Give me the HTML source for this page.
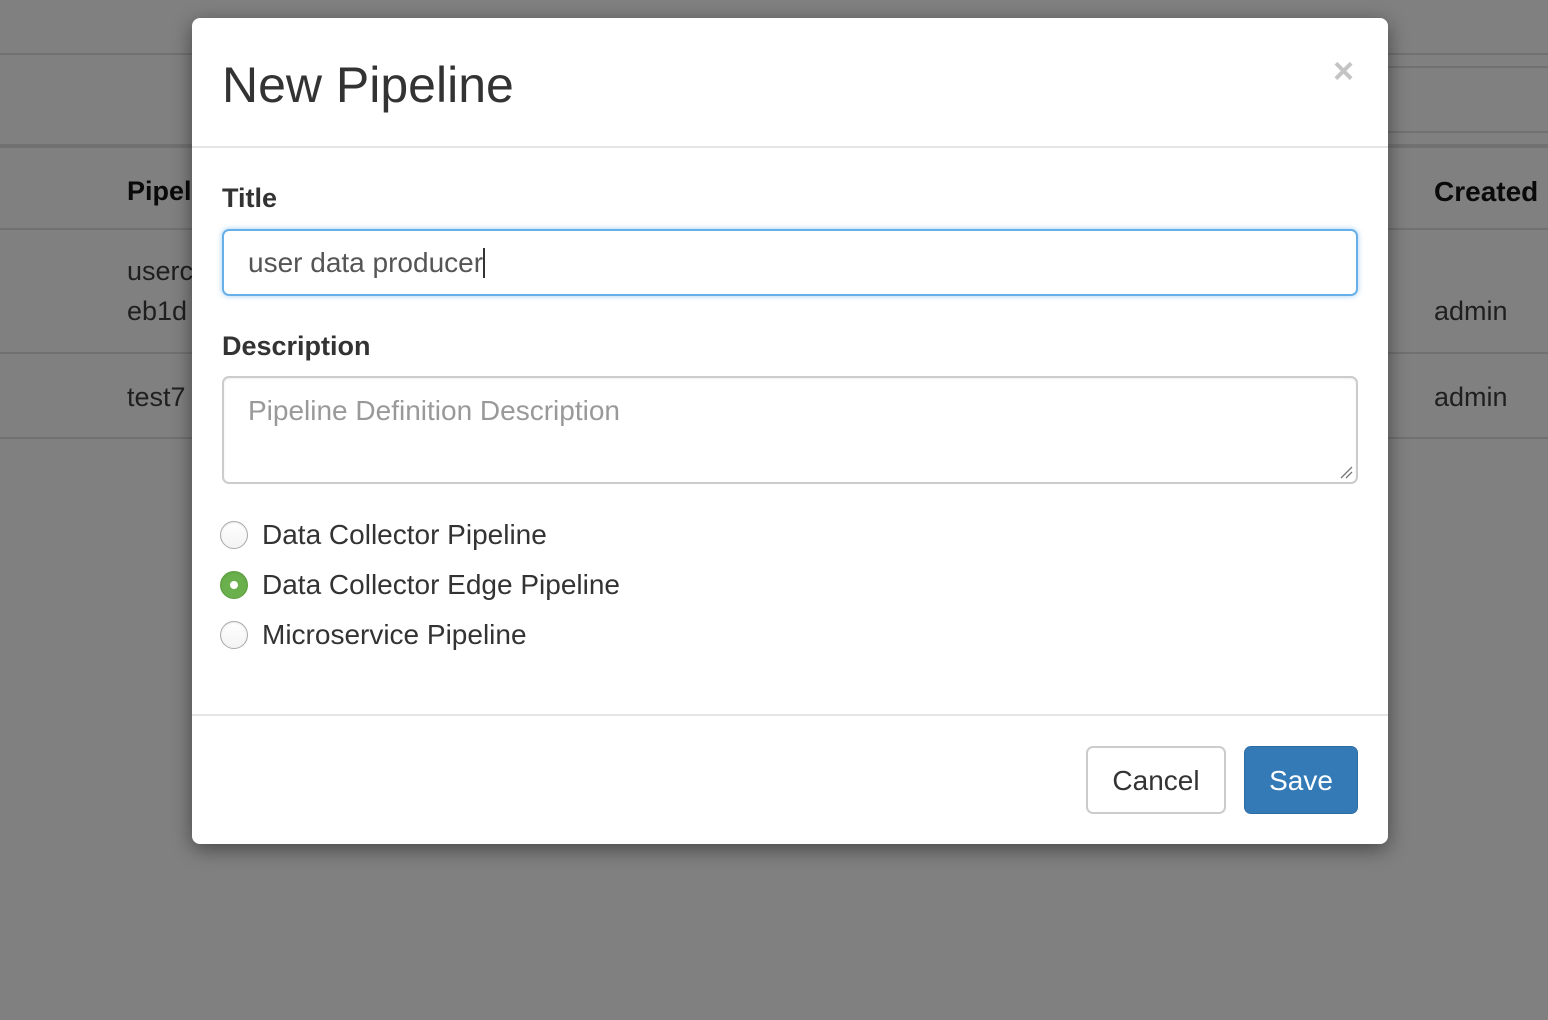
<!DOCTYPE html>
<html><head><meta charset="utf-8"><style>
*{margin:0;padding:0;box-sizing:border-box}
body{width:1548px;height:1020px;background:#808080;font-family:"Liberation Sans",Arial,sans-serif;position:relative;overflow:hidden;color:#333}
.l{position:absolute;left:0;right:0;height:2px;background:#717171}
.t{position:absolute;font-size:27px;color:#1f1f1f;white-space:nowrap}
.b{font-weight:bold;color:#0a0a0a}
.m{position:absolute;left:192px;top:18px;width:1196px;height:826px;background:#fff;border-radius:8px;box-shadow:0 5px 20px rgba(0,0,0,.45)}
.a{position:absolute;white-space:nowrap}
.r{position:absolute;left:220px;width:28px;height:28px;border-radius:50%;border:1px solid #aaa;background:linear-gradient(#fff,#f3f3f3);box-shadow:inset 0 1px 2px rgba(0,0,0,.08)}
.rl{position:absolute;left:262px;font-size:28px;color:#333}
</style></head><body>
<div class="l" style="top:53px"></div>
<div class="l" style="top:66px;left:1388px"></div>
<div class="l" style="top:131px;left:1388px"></div>
<div class="l" style="top:144px;height:4px"></div>
<div class="l" style="top:228px"></div>
<div class="l" style="top:352px"></div>
<div class="l" style="top:437px"></div>
<div class="t b" style="left:127px;top:176px">Pipel</div>
<div class="t b" style="left:1434px;top:176px;font-size:28px">Created</div>
<div class="t" style="left:127px;top:256px">userc</div>
<div class="t" style="left:127px;top:296px">eb1d</div>
<div class="t" style="left:127px;top:382px">test7</div>
<div class="t" style="left:1434px;top:296px">admin</div>
<div class="t" style="left:1434px;top:382px">admin</div>

<div class="m">
 <div class="a" style="left:30px;top:38px;font-size:50px;color:#333">New Pipeline</div>
 <div class="a" style="left:1141px;top:32px;font-size:36px;font-weight:bold;color:#c4c4c4">×</div>
 <div style="position:absolute;left:0;right:0;top:128px;height:2px;background:#e5e5e5"></div>
 <div class="a" style="left:30px;top:165px;font-size:27px;font-weight:bold">Title</div>
 <div style="position:absolute;left:30px;top:211px;width:1136px;height:67px;border:2px solid #66afe9;border-radius:7px;box-shadow:0 0 6px rgba(102,175,233,.6)">
  <span class="a" style="left:24px;top:16px;font-size:28px;color:#555">user data producer<span style="display:inline-block;width:2px;height:30px;background:#333;vertical-align:-6px"></span></span>
 </div>
 <div class="a" style="left:30px;top:313px;font-size:27px;font-weight:bold">Description</div>
 <div style="position:absolute;left:30px;top:358px;width:1136px;height:108px;border:2px solid #ccc;border-radius:7px;box-shadow:inset 0 1px 2px rgba(0,0,0,.07)">
  <span class="a" style="left:24px;top:17px;font-size:28px;color:#999">Pipeline Definition Description</span>
  <svg style="position:absolute;right:3px;bottom:3px" width="14" height="14"><path d="M2 13L13 2M7 13L13 7" stroke="#777" stroke-width="1.3"/></svg>
 </div>
</div>
<div class="r" style="top:521px"></div>
<div class="rl" style="top:519px">Data Collector Pipeline</div>
<div class="r" style="top:571px;background:#6ab04c;border-color:#5fa043"><div style="position:absolute;left:9px;top:9px;width:8px;height:8px;border-radius:50%;background:#fff"></div></div>
<div class="rl" style="top:569px">Data Collector Edge Pipeline</div>
<div class="r" style="top:621px"></div>
<div class="rl" style="top:619px">Microservice Pipeline</div>
<div style="position:absolute;left:192px;width:1196px;top:714px;height:2px;background:#e5e5e5"></div>
<div style="position:absolute;left:1086px;top:746px;width:140px;height:68px;border:2px solid #ccc;border-radius:7px;background:#fff;font-size:28px;color:#333;text-align:center;line-height:66px">Cancel</div>
<div style="position:absolute;left:1244px;top:746px;width:114px;height:68px;border:1px solid #2e6da4;border-radius:7px;background:#337ab7;font-size:28px;color:#fff;text-align:center;line-height:68px">Save</div>
</body></html>
